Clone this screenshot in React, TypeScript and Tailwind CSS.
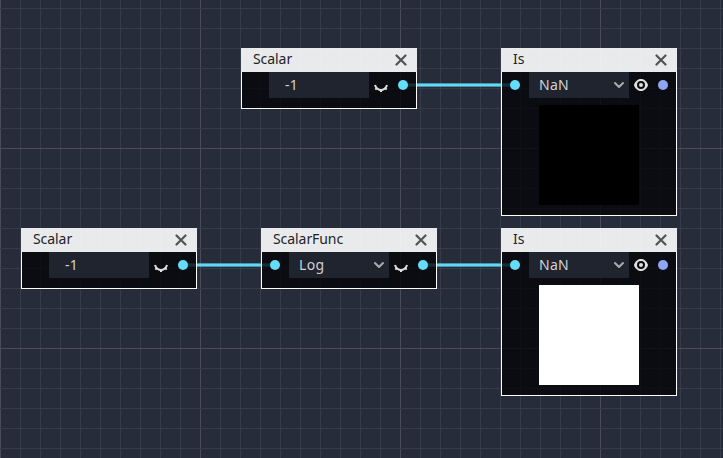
import React from "react";

type NodeKind = {
  id: string;
  title: string;
  x: number;
  y: number;
  value: string;
  select?: boolean;
  input?: boolean;
  preview?: "black" | "white";
};

const nodes: NodeKind[] = [
  { id: "a", title: "Scalar", x: 241, y: 48, value: "-1" },
  { id: "b", title: "Is", x: 501, y: 48, value: "NaN", select: true, input: true, preview: "black" },
  { id: "c", title: "Scalar", x: 21, y: 228, value: "-1" },
  { id: "d", title: "ScalarFunc", x: 261, y: 228, value: "Log", select: true, input: true },
  { id: "e", title: "Is", x: 501, y: 228, value: "NaN", select: true, input: true, preview: "white" },
];

const wires = [
  { x1: 403, x2: 515, y: 85 },
  { x1: 183, x2: 275, y: 265 },
  { x1: 423, x2: 515, y: 265 },
];

const columns = Array.from({ length: 37 }, (_, i) => i * 20);
const rows = Array.from({ length: 23 }, (_, i) => 8 + i * 20);

function Canvas() {
  return (
    <svg className="absolute inset-0" width="723" height="458" shapeRendering="crispEdges">
      {columns.map((x) => (
        <rect key={x} x={x} y="0" width="1" height="458" fill={x % 200 === 0 ? "#4b4c59" : "#373c4a"} />
      ))}
      {rows.map((y) => (
        <rect key={y} x="0" y={y} width="723" height="1" fill={y % 200 === 148 ? "#4b4c59" : "#373c4a"} />
      ))}
      {wires.map((w) => (
        <rect key={`${w.x1}-${w.y}`} x={w.x1} y={w.y - 1.6} width={w.x2 - w.x1} height="3.2" fill="#5fd9f5" shapeRendering="auto" />
      ))}
    </svg>
  );
}

function Port({ color }: { color: "cyan" | "blue" }) {
  return (
    <span className={`size-[10px] shrink-0 rounded-full ${color === "cyan" ? "bg-[#63ddf9]" : "bg-[#8da5f3]"}`} />
  );
}

function EyeOpen() {
  return (
    <svg width="16" height="16" viewBox="0 0 16 16" fill="#e0e0e0">
      <path d="M8 2C5.443 2 2.209 3.948 1.045 7.705a1 1 0 0 0-.006.57C2.163 12.212 5.499 14 8 14s5.837-1.788 6.961-5.725a1 1 0 0 0 0-.55C13.861 3.935 10.557 2 8 2zm0 2a4 4 0 0 1 4 4 4 4 0 0 1-4 4 4 4 0 0 1-4-4 4 4 0 0 1 4-4zm0 2a2 2 0 0 0-2 2 2 2 0 0 0 2 2 2 2 0 0 0 2-2 2 2 0 0 0-2-2z" />
    </svg>
  );
}

function EyeClosed() {
  return (
    <svg width="16" height="16" viewBox="0 0 16 16" fill="#e0e0e0">
      <path d="M2.96 7.727l-1.921.548c.32 1.12.824 2.06 1.432 2.84l-.834.834 1.414 1.414.843-.843c.986.747 2.077 1.206 3.106 1.386V15h2v-1.094c1.029-.18 2.12-.64 3.105-1.386l.844.843 1.414-1.414-.834-.834c.608-.78 1.112-1.72 1.432-2.84l-1.922-.548C12.177 10.757 9.797 12 8 12c-1.797 0-4.176-1.242-5.04-4.273z" />
    </svg>
  );
}

function GraphNode({ node }: { node: NodeKind }) {
  return (
    <section className="absolute w-44" style={{ left: node.x, top: node.y }}>
      <header className="flex h-6 items-center justify-between bg-white/90 pl-3 pr-[10px]">
        <h2 className="-mt-[2px] text-[14px] leading-5 tracking-[-0.07px] text-[#222327]">{node.title}</h2>
        <svg width="12" height="12" viewBox="0 0 12 12" stroke="#535355" strokeWidth="2.2" strokeLinecap="round">
          <path d="M1.5 1.5l9 9M10.5 1.5l-9 9" />
        </svg>
      </header>
      <div className={`border-x border-b border-white bg-[#040507]/80 bg-clip-padding ${node.preview ? "h-36" : "h-[37px]"}`}>
        <div className="flex h-[26px] items-center">
          <div className="flex w-[27px] pl-2">{node.input && <Port color="cyan" />}</div>
          <div
            className={`flex h-[26px] w-[100px] items-center justify-between bg-[#20242f] pr-1 text-[14px] tracking-[0.3px] text-[#d0d1d5] ${
              node.select ? "pl-[10px]" : "pl-4"
            }`}
          >
            <span className="leading-5">{node.value}</span>
            {node.select && (
              <svg width="12" height="12" viewBox="0 0 12 12" fill="none" stroke="#a9abb1" strokeWidth="2" strokeLinecap="round" strokeLinejoin="round">
                <path d="M2 4l4 4 4-4" />
              </svg>
            )}
          </div>
          <div className="ml-1">{node.preview ? <EyeOpen /> : <EyeClosed />}</div>
          <div className="ml-[9px] flex">
            <Port color={node.preview ? "blue" : "cyan"} />
          </div>
        </div>
        {node.preview && (
          <div className={`ml-[37px] mt-[7px] size-[100px] ${node.preview === "black" ? "bg-black" : "bg-white"}`} />
        )}
      </div>
    </section>
  );
}

export default function App() {
  return (
    <main className="relative h-[458px] w-[723px] overflow-hidden bg-[#272c3b] font-['Noto_Sans',sans-serif]">
      <Canvas />
      {nodes.map((node) => (
        <GraphNode key={node.id} node={node} />
      ))}
    </main>
  );
}
